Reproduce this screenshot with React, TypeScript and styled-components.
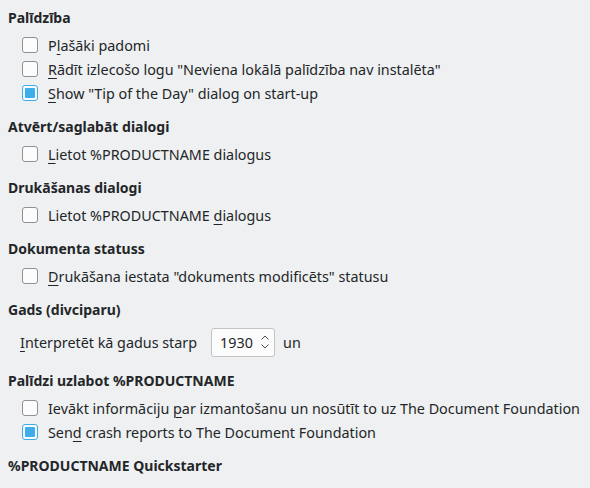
import React from 'react';
import styled, { createGlobalStyle } from 'styled-components';

const GlobalStyle = createGlobalStyle`
  html, body {
    margin: 0;
    padding: 0;
    background: #eff0f1;
  }
  body {
    font-family: 'Noto Sans', 'Liberation Sans', sans-serif;
    font-size: 14.35px;
    color: #232629;
  }
`;

const Page = styled.div`
  display: flex;
  flex-direction: column;
  gap: 13px;
  padding: 9px 8px;
  width: 590px;
  box-sizing: border-box;
`;

const Section = styled.section`
  display: flex;
  flex-direction: column;
`;

const Heading = styled.div`
  font-weight: 700;
  font-size: 14px;
  line-height: 18px;
  height: 18px;
`;

const Rows = styled.div`
  display: flex;
  flex-direction: column;
  margin-top: 6px;
`;

const CheckRow = styled.label`
  display: flex;
  align-items: center;
  height: 24px;
  padding-left: 14px;
  white-space: nowrap;
`;

const Box = styled.span<{ $checked?: boolean }>`
  position: relative;
  width: 16px;
  height: 16px;
  box-sizing: border-box;
  margin-right: 10px;
  border-radius: 3px;
  background: #fcfcfc;
  border: 1px solid ${(p) => (p.$checked ? '#3daee9' : '#8e9093')};
  flex-shrink: 0;

  &::after {
    content: '';
    display: ${(p) => (p.$checked ? 'block' : 'none')};
    position: absolute;
    inset: 2px;
    border-radius: 1px;
    background: #3daee9;
  }
`;

const Key = styled.u`
  text-decoration: underline;
  text-decoration-thickness: 1px;
  text-underline-offset: 3px;
`;

const SpinRow = styled.div`
  display: flex;
  align-items: center;
  height: 34px;
  padding-left: 12px;
`;

const SpinBox = styled.div`
  display: flex;
  align-items: center;
  justify-content: space-between;
  width: 64px;
  height: 29px;
  box-sizing: border-box;
  margin: 0 8px 0 14px;
  padding: 0 4px 0 8px;
  background: #fcfcfc;
  border: 1px solid #c1c3c5;
  border-radius: 3px;
`;

const Arrows = styled.svg`
  width: 10px;
  height: 20px;
`;

type Item = { label: React.ReactNode; checked?: boolean };

const Check: React.FC<Item> = ({ label, checked }) => (
  <CheckRow>
    <Box $checked={checked} />
    <span>{label}</span>
  </CheckRow>
);

const App: React.FC = () => {
  return (
    <>
      <GlobalStyle />
      <Page>
        <Section>
          <Heading>Palīdzība</Heading>
          <Rows>
            <Check label={<>P<Key>l</Key>ašāki padomi</>} />
            <Check label={<><Key>R</Key>ādīt izlecošo logu "Neviena lokālā palīdzība nav instalēta"</>} />
            <Check checked label={<><Key>S</Key>how "Tip of the Day" dialog on start-up</>} />
          </Rows>
        </Section>
        <Section>
          <Heading>Atvērt/saglabāt dialogi</Heading>
          <Rows>
            <Check label={<><Key>L</Key>ietot %PRODUCTNAME dialogus</>} />
          </Rows>
        </Section>
        <Section>
          <Heading>Drukāšanas dialogi</Heading>
          <Rows>
            <Check label={<>Lietot %PRODUCTNAME <Key>d</Key>ialogus</>} />
          </Rows>
        </Section>
        <Section>
          <Heading>Dokumenta statuss</Heading>
          <Rows>
            <Check label={<><Key>D</Key>rukāšana iestata "dokuments modificēts" statusu</>} />
          </Rows>
        </Section>
        <Section>
          <Heading>Gads (divciparu)</Heading>
          <Rows>
            <SpinRow>
              <span><Key>I</Key>nterpretēt kā gadus starp</span>
              <SpinBox>
                <span>1930</span>
                <Arrows viewBox="0 0 10 20">
                  <path d="M1.5 7.5 L5 4 L8.5 7.5" fill="none" stroke="#4d4f52" strokeWidth="1" />
                  <path d="M1.5 12.5 L5 16 L8.5 12.5" fill="none" stroke="#4d4f52" strokeWidth="1" />
                </Arrows>
              </SpinBox>
              <span>un</span>
            </SpinRow>
          </Rows>
        </Section>
        <Section>
          <Heading>Palīdzi uzlabot %PRODUCTNAME</Heading>
          <Rows>
            <Check label={<>Ievākt informāciju <Key>p</Key>ar izmantošanu un nosūtīt to uz The Document Foundation</>} />
            <Check checked label={<>Sen<Key>d</Key> crash reports to The Document Foundation</>} />
          </Rows>
        </Section>
        <Section>
          <Heading>%PRODUCTNAME Quickstarter</Heading>
        </Section>
      </Page>
    </>
  );
};

export default App;
